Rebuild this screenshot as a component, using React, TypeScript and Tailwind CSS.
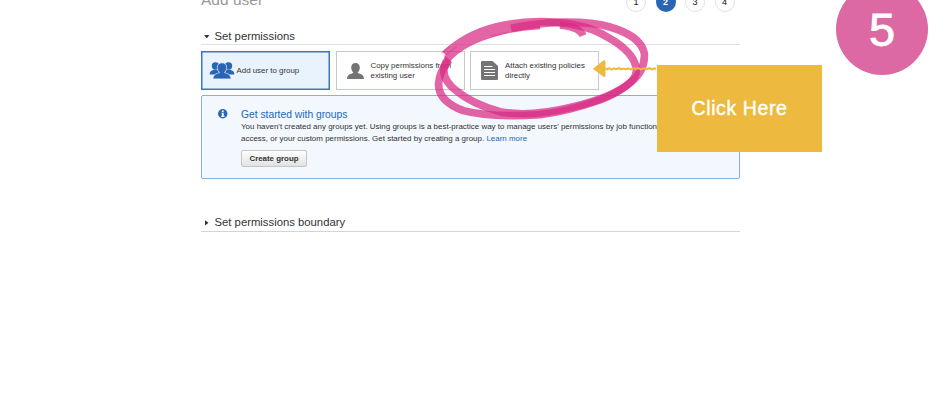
import React from 'react';

function Person({ className }: { className: string }) {
  return (
    <svg viewBox="0 0 17 16" className={className} fill="currentColor">
      <path d="M8.500 0c2.700 0 4.300 1.900 4.300 4.500 0 2.100-.9 3.800-2 4.700v.8c1.900.9 6.200 1.200 6.200 6H0c0-4.800 4.300-5.100 6.200-6v-.8c-1.100-.9-2-2.600-2-4.700C4.200 1.900 5.800 0 8.500 0z" />
    </svg>
  );
}

function GroupIcon() {
  return (
    <svg viewBox="0 0 26 17" className="h-[17px] w-[26px] shrink-0 text-[#2a65b5]" fill="currentColor">
      <circle cx="6.500" cy="4" r="3.700" />
      <circle cx="19.500" cy="4" r="3.700" />
      <path d="M.6 12.500c0-3 1.600-4 4.200-4.800h4l2 4.800zM25.400 12.500c0-3-1.600-4-4.200-4.800h-4l-2 4.800z" />
      <path
        d="M13 .8c2.900 0 4.700 1.900 4.700 4.700 0 2.100-.9 3.700-2 4.600v.6c1.900.8 6.300 1.300 6.300 6.200H4c0-4.900 4.400-5.400 6.300-6.200v-.6c-1.100-.9-2-2.500-2-4.600C8.300 2.700 10.100.8 13 .8z"
        stroke="#e9f3fd"
        strokeWidth=".7"
      />
    </svg>
  );
}

function DocumentIcon() {
  return (
    <svg viewBox="0 0 17 19" className="h-[19px] w-[17px] shrink-0">
      <path d="M1.300 0H11.500L17 5v12.700q0 1.300-1.300 1.300H1.300Q0 19 0 17.700V1.300Q0 0 1.300 0z" fill="#747474" />
      <path d="M3 5.500h8.500M3 8.500h11M3 11.500h11M3 14.500h11" stroke="#fff" strokeWidth="1.100" />
    </svg>
  );
}

function Steps() {
  return (
    <div className="-mt-2 flex gap-[9.500px] pr-[5px]">
      {['1', '2', '3', '4'].map((n) => (
        <span
          key={n}
          className={
            n === '2'
              ? 'flex h-5 w-5 items-center justify-center rounded-full bg-[#2a65b5] pt-px text-[9px] font-bold text-white'
              : 'flex h-5 w-5 items-center justify-center rounded-full border border-[#e2e2e2] bg-white pt-px text-[9px] text-[#111]'
          }
        >
          {n}
        </span>
      ))}
    </div>
  );
}

function Scribble() {
  return (
    <svg viewBox="0 0 720 390" className="absolute left-[425px] top-0 h-[130px] w-[240px]" fill="none" stroke="#d92a83" strokeLinejoin="round">
      <g opacity=".72">
        <path strokeWidth="23" d="M60 163C100 124 155 95 215 80C275 66 335 62 395 67C465 73 510 88 545 110C600 140 633 175 634 212C634 245 585 275 525 300C465 321 405 338 345 344C260 349 175 348 115 332C63 312 38 285 41 248C43 225 52 205 72 180" />
        <path strokeWidth="22" d="M66 178C100 138 155 113 215 97C255 86 300 79 345 77" />
      </g>
      <path
        strokeWidth="22"
        strokeOpacity=".72"
        d="M474 107C466 88 444 79 405 75"
      />
      <path
        strokeWidth="23"
        strokeOpacity=".72"
        d="M70 176C46 208 54 242 95 273C125 298 170 320 225 335C300 350 380 336 445 320C520 303 580 278 618 246C648 222 660 192 658 160C650 122 615 99 555 81C520 71 470 65 400 67C345 69 300 76 258 85"
      />
      <path strokeWidth="5" strokeOpacity=".3" d="M49 160L75 138M196 108L248 97M57 168L95 140" />
    </svg>
  );
}

function Arrow() {
  return (
    <svg viewBox="0 0 66 20" className="absolute left-[592px] top-[59px] h-5 w-[66px]">
      <path d="M.8 9.700L12 1l1.500 1v15.400l-1.600.6z" fill="#edb93f" />
      <path d="M13 9.400l2 .9 2-1.100 2 1.400 3-1.300 2 .9 3-1 2 1.200 2-.9 3 .7 2-.9 3 1.200 2-1.200 3 .7 2-.9 3 1.300 3-1 3 .8 2-1 3 1.100 2-.9 2 .4" fill="none" stroke="#edb93f" strokeWidth="2" />
    </svg>
  );
}

export default function App() {
  return (
    <div className="relative h-[400px] w-[940px] overflow-hidden bg-white font-['Liberation_Sans',Arial,sans-serif] text-[#333]">
      <main className="ml-[201px] w-[538.500px]">
        <header className="flex h-[27px] items-start justify-between">
          <h1 className="-mt-[9px] text-[15.500px] leading-[18px] text-[#999]">Add user</h1>
          <Steps />
        </header>

        <section>
          <div className="flex h-[18px] items-center border-b border-[#dfdfdf] pl-[3px]">
            <svg viewBox="0 0 6 4" className="mt-0.5 h-[3.500px] w-[5.500px]"><path d="M0 0h6L3 4z" fill="#333" /></svg>
            <h2 className="ml-[5px] text-[11.300px] leading-[14px]">Set permissions</h2>
          </div>

          <div className="mt-[6px] flex gap-[5.500px] text-[7.900px] leading-[10px]">
            <div className="flex h-[39px] w-[129px] items-center border border-[#3d76bd] bg-[#e9f3fd] pl-[7px] shadow-[inset_0_0_0_0.500px_#3d76bd]">
              <GroupIcon />
              <span className="ml-[1.500px] whitespace-nowrap">Add user to group</span>
            </div>
            <div className="flex h-[39px] w-[129px] items-center border border-[#c8c8c8] pl-[10px] text-[#747474]">
              <Person className="h-[16px] w-[17px] shrink-0" />
              <span className="ml-[7px] whitespace-nowrap text-[#333]">Copy permissions from<br />existing user</span>
            </div>
            <div className="flex h-[39px] w-[129px] items-center border border-[#c8c8c8] pl-[10px]">
              <DocumentIcon />
              <span className="ml-[7px] whitespace-nowrap">Attach existing policies<br />directly</span>
            </div>
          </div>

          <div className="mt-[5px] flex h-[84px] rounded-[2px] border border-[#8caedb] bg-[#f2f8fd] pl-[16px] pt-[13px]">
            <svg viewBox="0 0 10 10" className="h-[9.500px] w-[9.500px] shrink-0">
              <circle cx="5" cy="5" r="5" fill="#2a65b5" />
              <path d="M4 1.600h2v1.600H4zM3.500 4H6v3.200h.8v1.100H3.400V7.200h.8V5.100h-.7z" fill="#fff" />
            </svg>
            <div className="ml-[13.500px]">
              <h3 className="-mt-px text-[10.300px] leading-[13px] text-[#2267bd]">Get started with groups</h3>
              <p className="w-[495px] overflow-hidden whitespace-nowrap text-[7.970px] leading-[12px]">
                You haven't created any groups yet. Using groups is a best-practice way to manage users' permissions by job function
                <br />
                access, or your custom permissions. Get started by creating a group. <span className="text-[#2267bd]">Learn more</span>
              </p>
              <button className="mt-[5px] flex h-[17px] w-[66px] items-center justify-center rounded-[2px] border border-[#c5c5c5] bg-linear-to-b from-white to-[#e2e2e2] text-[7.900px] font-bold text-[#333]">
                Create group
              </button>
            </div>
          </div>
        </section>

        <section className="mt-[34px] flex h-[19px] items-center border-b border-[#d4d4d4] pl-[4px]">
          <svg viewBox="0 0 4 6" className="mt-0.5 h-[5.500px] w-[3.500px]"><path d="M0 0v6l4-3z" fill="#333" /></svg>
          <h2 className="ml-[6px] text-[11.300px] leading-[14px]">Set permissions boundary</h2>
        </section>
      </main>

      <Scribble />
      <Arrow />
      <div className="absolute left-[657px] top-[65px] flex h-[87px] w-[165px] items-center justify-center bg-[#edb93f] pt-px text-[19.500px] tracking-[0.600px] text-white [-webkit-text-stroke:0.400px_white]">
        Click Here
      </div>
      <div className="absolute left-[836px] top-[-17px] flex h-[92px] w-[92px] items-center justify-center rounded-full bg-[#dd69a4] pt-0.5 text-[47px] text-white [-webkit-text-stroke:0.800px_white]">
        5
      </div>
    </div>
  );
}
